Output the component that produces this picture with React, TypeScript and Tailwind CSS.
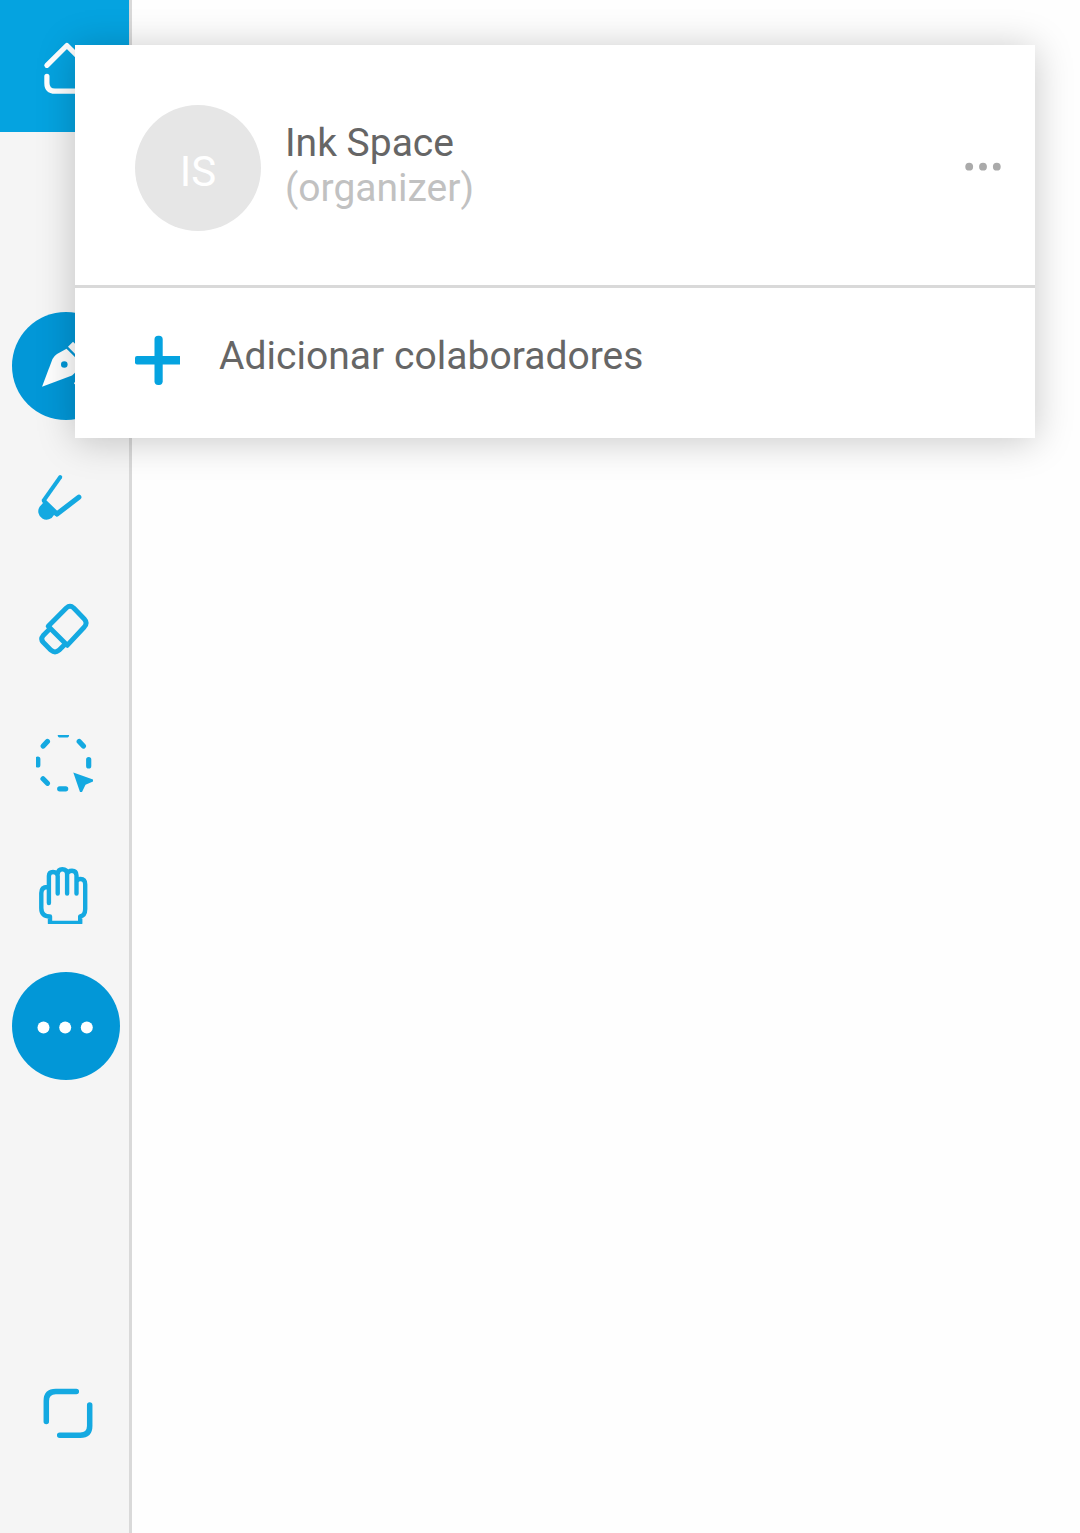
import type { ReactNode } from "react";

const BLUE = "#14a9e1";

/* One square cell of the tool rail; `top` is the cell's offset in the rail's drawing units. */
function Tool({ label, top, active = false, children }: { label: string; top: number; active?: boolean; children: ReactNode }) {
  return (
    <button aria-label={label} className="flex size-[132px] shrink-0 items-center justify-center">
      <span className={active ? "size-[108px] rounded-full bg-[#0297d7]" : "size-[108px]"}>
        <svg viewBox={`12 ${top + 12} 108 108`} className="block size-full" fill="none" strokeLinecap="round" strokeLinejoin="round">
          {children}
        </svg>
      </span>
    </button>
  );
}

function Sidebar() {
  return (
    <nav className="flex h-full w-[132px] shrink-0 flex-col border-r-[3px] border-[#d9d9d9] bg-[#f5f5f5]">
      <button aria-label="Home" className="h-[132px] w-full shrink-0 bg-[#05a3e0]">
        <svg viewBox="0 0 129 132" className="size-full" fill="none" stroke="#fff" strokeWidth="5.200" strokeLinecap="round" strokeLinejoin="round">
          <path d="M46.900 65.300 66.900 45.500 87 65.500M46.900 76.300V83Q46.900 91.200 55 91.200H79Q87 91.200 87 83V76.300" />
        </svg>
      </button>
      <div className="mt-[168px] flex w-[132px] flex-col">
        <Tool label="Pen" top={300} active>
          <path d="M42 386.800 52.500 359Q54 356 57 354L66.500 348.800 80 362Q78 371 72 375.500Z" fill="#fff" />
          <path d="M68 346.800 73 341.800 88 356.500 82 361Z" fill="#fff" />
          <circle cx="64.300" cy="364.500" r="3.300" fill="#0297d7" />
          <path d="M75 383.300Q80 382 84 380" stroke="#fff" strokeWidth="2" />
        </Tool>
        <Tool label="Brush" top={432}>
          <path d="M60.300 477 43.700 500.500" stroke={BLUE} strokeWidth="3.900" />
          <path d="M57 514 78.800 497.200" stroke={BLUE} strokeWidth="5.200" />
          <path d="M41.800 501.500 44.500 498.500 59 512.500 57 516.500 54 515A8.300 8.300 0 1 1 39.800 506.500L43 503Z" fill={BLUE} />
        </Tool>
        <Tool label="Eraser" top={564}>
          <g stroke={BLUE} strokeWidth="4.900">
            <path d="M48.200 626.300 66.300 608Q70 604.600 73.700 608L84.300 619Q87.900 622.900 84.300 627L67.200 645.300Z" />
            <path d="M50 628.600 43.200 635.500Q40.200 639 43.200 642.300L51 650.200Q55 653.700 59 650.200L65 644.200" />
          </g>
        </Tool>
        <Tool label="Select" top={696}>
          <path d="M60.300 735H66.500M79.200 741.500 83.400 746M88.700 759.500V766M65.700 788.800H59.700M47.400 783.300 43 778.800M37.800 765V759M43.200 746 47.400 741.500" stroke={BLUE} strokeWidth="5.200" clipPath="url(#lasso)" />
          <clipPath id="lasso"><path d="M36 735H94V792H36Z" /></clipPath>
          <path d="M73.300 772.600 93 779.500V781.500L85.500 784.800 82 792H80Z" fill={BLUE} />
        </Tool>
        <Tool label="Hand" top={828}>
          <g clipPath="url(#palm)">
            <path d="M48.900 903V876Q49 872 53 872Q57.500 872 57.700 876V893.500M57.700 874Q58 869.200 62.300 869.200Q67 869.200 67.100 874V893.500M67.100 874Q68 870.800 72 870.800Q76.400 870.800 76.500 875.500V893.500M76.500 882Q77 879 80.500 879Q85.200 879 85.200 884.500V909Q85.200 915.500 80.200 916.500V923H50V916.500Q41.300 916.500 41.300 908V893Q41.300 887 47.500 887" stroke={BLUE} strokeWidth="4.400" />
          </g>
          <clipPath id="palm"><path d="M36 867H94V924H36Z" /></clipPath>
        </Tool>
        <Tool label="More tools" top={960} active>
          <g fill="#fff"><circle cx="43.500" cy="1027.500" r="6" /><circle cx="65.200" cy="1027.500" r="6" /><circle cx="86.800" cy="1027.500" r="6" /></g>
        </Tool>
      </div>
      <div className="mt-auto mb-[54px]">
        <Tool label="Full screen" top={1347}>
          <path d="M46.300 1421.500V1401Q46.300 1391.600 55.800 1391.600H76.300M89.700 1405V1426Q89.700 1435.200 80.200 1435.200H59.700" stroke={BLUE} strokeWidth="5.500" />
        </Tool>
      </div>
    </nav>
  );
}

function CollaboratorsPanel() {
  return (
    <section className="absolute top-[45px] left-[75px] h-[393px] w-[960px] bg-white text-[39px] leading-[45px] text-[#666] shadow-[0_3px_36px_rgba(0,0,0,0.22)]">
      <div className="flex h-[243px] items-start border-b-[3px] border-[#d9d9d9] pt-[60px] pr-[34px] pl-[60px]">
        <div className="flex size-[126px] items-center justify-center rounded-full bg-[#e6e6e6] pt-[6px] text-[42px] text-white">IS</div>
        <div className="ml-6 pt-4">
          <div>Ink Space</div>
          <div className="text-[#c1c1c1]">(organizer)</div>
        </div>
        <button aria-label="Options" className="mt-[57px] ml-auto">
          <svg viewBox="0 0 36 9" className="h-[9px] w-9" fill="#aaa">
            <circle cx="4.200" cy="4.700" r="3.900" />
            <circle cx="18" cy="4.700" r="3.900" />
            <circle cx="31.800" cy="4.700" r="3.900" />
          </svg>
        </button>
      </div>
      <button className="flex h-[150px] w-full items-start pt-[45px] pl-[60px] text-left">
        <svg viewBox="0 0 45 54" className="h-[54px] w-[45px]" fill="#05a3e0">
          <rect x="18.500" y="2.700" width="8.200" height="49.300" rx="3.700" transform="translate(1 0)" />
          <path d="M2 23H45V31.500H2Q0 31.500 0 29.500V25Q0 23 2 23Z" />
        </svg>
        <span className="mt-px ml-[39px] tracking-[0.03px]">Adicionar colaboradores</span>
      </button>
    </section>
  );
}

export default function App() {
  return (
    <main className="relative flex h-[1533px] w-[1080px] overflow-hidden bg-[#fefefe] font-['Roboto',sans-serif]">
      <Sidebar />
      <CollaboratorsPanel />
    </main>
  );
}
